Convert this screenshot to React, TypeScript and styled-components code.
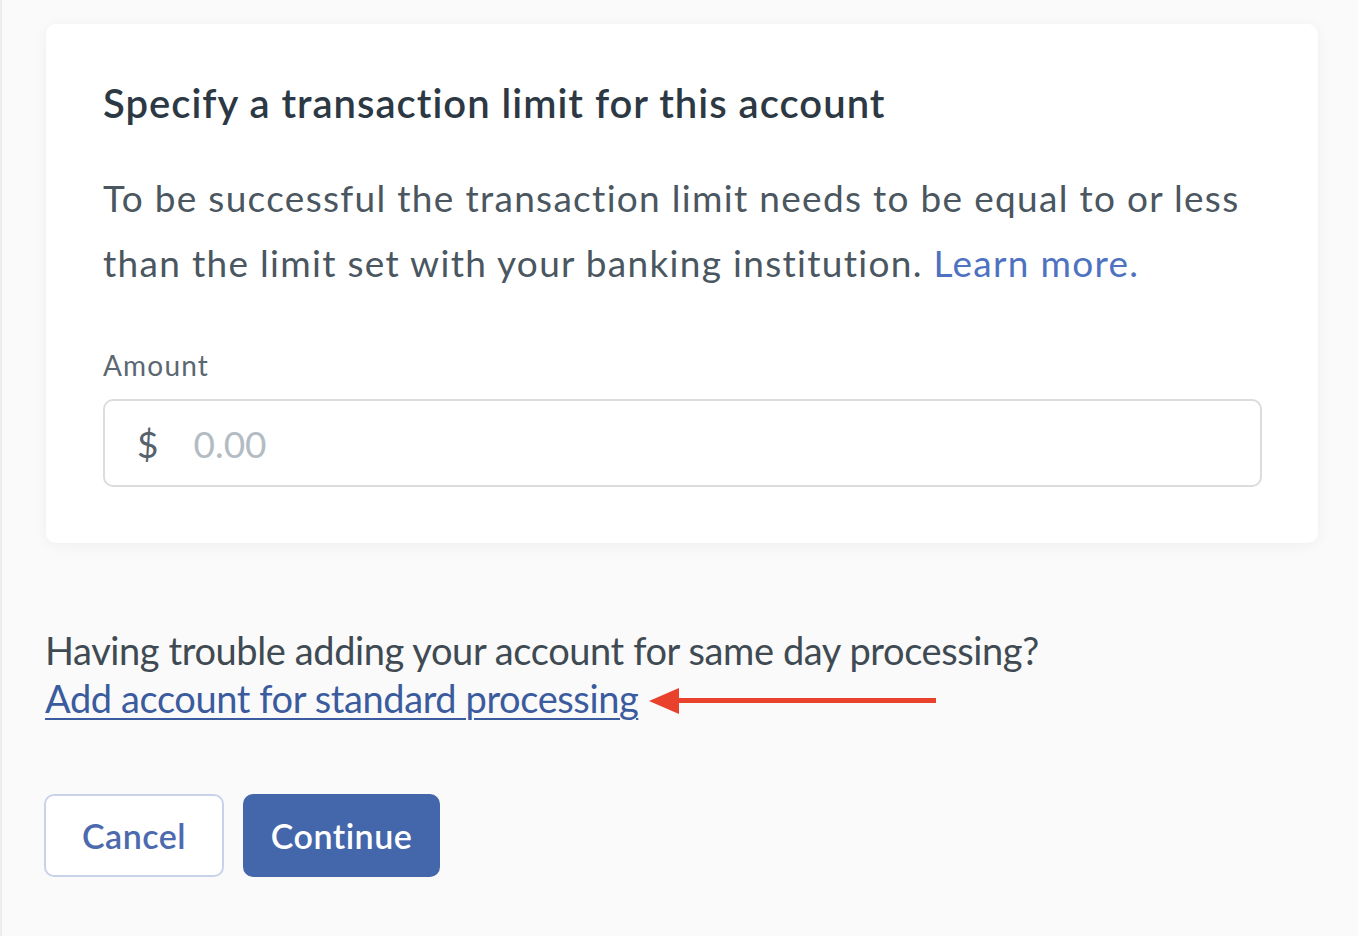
import React from "react";
import styled, { createGlobalStyle } from "styled-components";

const GlobalStyle = createGlobalStyle`
  html, body {
    margin: 0;
    padding: 0;
    background: #fafafa;
  }
  body {
    font-family: Lato, "Open Sans", sans-serif;
    color: #35414b;
  }
`;

const Page = styled.div`
  min-height: 936px;
  box-sizing: border-box;
  border-left: 2px solid #ececec;
  padding: 24px 40px 0 42px;
`;

const Card = styled.section`
  width: 1272px;
  margin-left: 2px;
  box-sizing: border-box;
  background: #ffffff;
  border-radius: 10px;
  box-shadow: 0 2px 14px rgba(0, 0, 0, 0.05);
  padding: 59px 56px 56px 57px;
`;

const Title = styled.h2`
  margin: 0;
  font-size: 40px;
  line-height: 40px;
  font-weight: 600;
  color: #2c3944;
  letter-spacing: 1px;
`;

const Body = styled.p`
  margin: 42px 0 0;
  font-size: 37px;
  line-height: 65px;
  color: #4a5660;
  letter-spacing: 1.3px;
`;

const LearnMore = styled.a`
  color: #4f72c0;
  text-decoration: none;
`;

const Label = styled.label`
  display: block;
  margin-top: 54px;
  font-size: 28px;
  line-height: 32px;
  color: #5b6771;
  letter-spacing: 1.2px;
`;

const InputBox = styled.div`
  margin-top: 18px;
  height: 88px;
  box-sizing: border-box;
  border: 2px solid #dcdcdc;
  border-radius: 10px;
  display: flex;
  align-items: center;
  padding-left: 32px;
  gap: 35px;
  font-size: 37px;
`;

const Currency = styled.span`
  color: #56626c;
`;

const Placeholder = styled.span`
  color: #b3bcc3;
`;

const Help = styled.div`
  margin-top: 83px;
  margin-left: 1px;
  font-size: 38px;
  line-height: 48px;
  letter-spacing: -0.4px;
  color: #3f4a53;
`;

const LinkRow = styled.div`
  display: flex;
  align-items: center;
  gap: 11px;
`;

const StandardLink = styled.a`
  color: #3a5b9e;
  text-decoration: underline;
  text-decoration-thickness: 2px;
  text-underline-offset: 5px;
`;

const ArrowMark = styled.svg`
  margin-top: 6px;
  flex: none;
`;

const Actions = styled.div`
  margin-top: 72px;
  display: flex;
  gap: 19px;
`;

const Button = styled.button<{ $primary?: boolean }>`
  height: 83px;
  width: ${(p) => (p.$primary ? 197 : 180)}px;
  box-sizing: border-box;
  border-radius: 10px;
  font-family: Lato, sans-serif;
  font-size: 34px;
  font-weight: 600;
  letter-spacing: 0.5px;
  cursor: pointer;
  border: 2px solid ${(p) => (p.$primary ? "#4467ab" : "#c8d3ea")};
  background: ${(p) => (p.$primary ? "#4467ab" : "#ffffff")};
  color: ${(p) => (p.$primary ? "#ffffff" : "#4c6aad")};
`;

const Arrow = () => (
  <ArrowMark width="288" height="32" viewBox="0 0 288 32">
    <polygon points="0,16 30,3 30,29" fill="#e8412c" />
    <rect x="28" y="13" width="259" height="5" fill="#e8412c" />
  </ArrowMark>
);

export default function App() {
  return (
    <>
      <GlobalStyle />
      <Page>
        <Card>
          <Title>Specify a transaction limit for this account</Title>
          <Body>
            To be successful the transaction limit needs to be equal to or less
            than the limit set with your banking institution.{" "}
            <LearnMore href="#">Learn more.</LearnMore>
          </Body>
          <Label>Amount</Label>
          <InputBox>
            <Currency>$</Currency>
            <Placeholder>0.00</Placeholder>
          </InputBox>
        </Card>
        <Help>
          Having trouble adding your account for same day processing?
          <LinkRow>
            <StandardLink href="#">Add account for standard processing</StandardLink>
            <Arrow />
          </LinkRow>
        </Help>
        <Actions>
          <Button>Cancel</Button>
          <Button $primary>Continue</Button>
        </Actions>
      </Page>
    </>
  );
}
